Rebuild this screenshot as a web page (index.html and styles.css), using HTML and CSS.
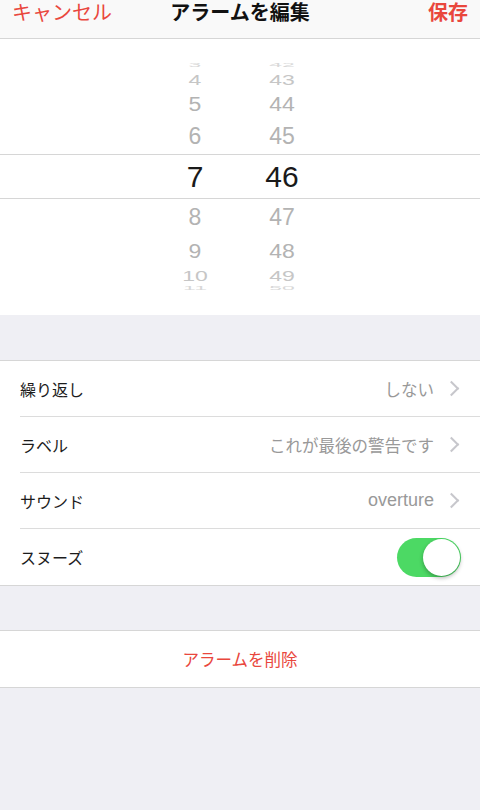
FILE: index.html
```html
<!DOCTYPE html>
<html lang="ja">
<head>
    <meta charset="UTF-8">
    <meta name="viewport" content="width=device-width, initial-scale=1.0">
    <title>アラームを編集</title>
    <link rel="stylesheet" href="styles.css">
</head>
<body>
    <div class="nav">
        <span class="nav-cancel">キャンセル</span>
        <span class="nav-title">アラームを編集</span>
        <span class="nav-save">保存</span>
    </div>

    <div class="picker">
        <div class="wheel-row r-edge-top"><span>3</span><span>42</span></div>
        <div class="wheel-row r-far-top"><span>4</span><span>43</span></div>
        <div class="wheel-row r-mid-top"><span>5</span><span>44</span></div>
        <div class="wheel-row r-near-top"><span>6</span><span>45</span></div>
        <div class="wheel-row r-selected"><span>7</span><span>46</span></div>
        <div class="wheel-row r-near-bottom"><span>8</span><span>47</span></div>
        <div class="wheel-row r-mid-bottom"><span>9</span><span>48</span></div>
        <div class="wheel-row r-far-bottom"><span>10</span><span>49</span></div>
        <div class="wheel-row r-edge-bottom"><span>11</span><span>50</span></div>
    </div>

    <div class="gap"></div>

    <div class="group">
        <div class="cell">
            <span class="cell-label">繰り返し</span>
            <span class="cell-value">しない</span>
            <span class="chevron"></span>
        </div>
        <div class="cell">
            <span class="cell-label">ラベル</span>
            <span class="cell-value">これが最後の警告です</span>
            <span class="chevron"></span>
        </div>
        <div class="cell">
            <span class="cell-label">サウンド</span>
            <span class="cell-value latin">overture</span>
            <span class="chevron"></span>
        </div>
        <div class="cell">
            <span class="cell-label">スヌーズ</span>
            <span class="toggle on"><span class="knob"></span></span>
        </div>
    </div>

    <div class="gap gap-small"></div>

    <div class="group">
        <div class="cell delete">アラームを削除</div>
    </div>
</body>
</html>
```

FILE: styles.css
```css
body {
    margin: 0;
    padding: 0;
    background: #efeff4;
    font-family: "Noto Sans CJK JP", "Liberation Sans", sans-serif;
    color: #1c1c1c;
    width: 480px;
    min-height: 810px;
}

/* nav bar */
.nav {
    height: 38px;
    background: #f9f9f9;
    border-bottom: 1px solid #d6d6d6;
    display: flex;
    align-items: flex-start;
    justify-content: space-between;
    padding: 1px 12px 0;
    box-sizing: content-box;
    height: 37px;
    font-size: 20px;
    line-height: 22px;
}
.nav-cancel {
    color: #e9473d;
    width: 110px;
}
.nav-title {
    font-weight: bold;
    color: #111;
}
.nav-save {
    color: #e9473d;
    font-weight: bold;
    width: 110px;
    text-align: right;
}

/* time picker */
.picker {
    background: #fff;
    height: 276px;
    padding-top: 21px;
    box-sizing: border-box;
    overflow: hidden;
    font-family: "Liberation Sans", sans-serif;
}
.wheel-row {
    display: flex;
    align-items: center;
    color: #b3b3b3;
    font-size: 23px;
}
.wheel-row span {
    display: block;
    text-align: center;
}
.wheel-row span:first-child {
    width: 80px;
    margin-left: 155px;
}
.wheel-row span:last-child {
    width: 80px;
    margin-left: 7px;
}
.r-edge-top { height: 11px; color: #d8d8d8; transform: scaleY(0.25); }
.r-far-top { height: 19px; color: #c6c6c6; transform: scaleY(0.6); }
.r-mid-top { height: 29px; transform: scaleY(0.85); }
.r-near-top { height: 35px; }
.r-selected {
    height: 45px;
    box-sizing: border-box;
    border-top: 1px solid #d6d6d6;
    border-bottom: 1px solid #d6d6d6;
    color: #1a1a1a;
    font-size: 30px;
}
.r-near-bottom { height: 36px; }
.r-mid-bottom { height: 33px; transform: scaleY(0.85); }
.r-far-bottom { height: 16px; color: #c6c6c6; transform: scaleY(0.6); }
.r-edge-bottom { height: 8px; color: #d8d8d8; transform: scaleY(0.25); }

.gap {
    height: 45px;
}
.gap-small {
    height: 44px;
}

/* settings groups */
.group {
    background: #fff;
    border-top: 1px solid #d6d6d6;
    border-bottom: 1px solid #d6d6d6;
}
.cell {
    display: flex;
    align-items: center;
    height: 56px;
    box-sizing: border-box;
    margin-left: 20px;
    padding-right: 20px;
    border-bottom: 1px solid #dcdcdc;
    font-size: 16px;
}
.cell:last-child {
    border-bottom: none;
}
.cell-label {
    flex: 1;
}
.cell-value {
    color: #999999;
    font-size: 16.5px;
}
.cell-value.latin {
    font-family: "Liberation Sans", sans-serif;
    font-size: 18px;
}
.chevron {
    width: 9px;
    height: 9px;
    border-top: 2px solid #c7c7cc;
    border-right: 2px solid #c7c7cc;
    transform: rotate(45deg);
    margin-left: 12px;
    margin-right: 3px;
}

.toggle {
    width: 64px;
    height: 39px;
    border-radius: 20px;
    background: #4cd964;
    position: relative;
    margin-right: -1px;
}
.toggle .knob {
    position: absolute;
    top: 1px;
    right: 1px;
    width: 37px;
    height: 37px;
    border-radius: 50%;
    background: #fff;
    box-shadow: 0 2px 4px rgba(0, 0, 0, 0.3);
}

.delete {
    margin-left: 0;
    padding-right: 0;
    justify-content: center;
    color: #e9473d;
    font-size: 16.5px;
}
```
